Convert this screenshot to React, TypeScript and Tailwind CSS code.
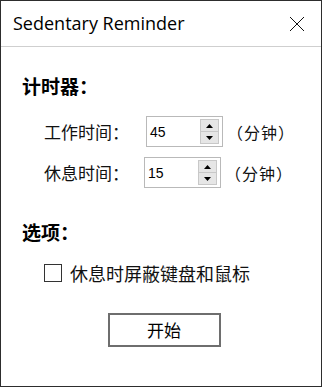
import { useState } from 'react';

const cjk = '"Microsoft YaHei", "Noto Sans CJK SC", "Noto Sans", sans-serif';

function SpinBox({ value }: { value: string }) {
  return (
    <div className="flex h-[31px] w-[77px] items-center border border-[#b9b9b9] bg-white">
      <span className="flex-1 pl-[3px] font-['Liberation_Sans',sans-serif] text-[14px] leading-none text-black">
        {value}
      </span>
      <div className="mr-[3px] flex h-[25px] w-[19px] flex-col border border-[#c8c8c8] bg-[#e6e6e6]">
        <div className="flex flex-1 items-center justify-center border-b border-[#c8c8c8]">
          <svg width="7" height="4" viewBox="0 0 7 4">
            <path d="M0 4 L3.5 0 L7 4 Z" fill="#000" />
          </svg>
        </div>
        <div className="flex flex-1 items-center justify-center">
          <svg width="7" height="4" viewBox="0 0 7 4">
            <path d="M0 0 L3.5 4 L7 0 Z" fill="#000" />
          </svg>
        </div>
      </div>
    </div>
  );
}

function TimeRow({ label, value, shift }: { label: string; value: string; shift?: boolean }) {
  return (
    <div className="flex h-[31px] items-center">
      <span
        className={`whitespace-nowrap pl-[43px] text-[17px] text-[#111] ${shift ? 'w-[143px]' : 'w-[145px]'}`}
        style={{ fontFamily: cjk }}
      >
        {label}
      </span>
      <SpinBox value={value} />
      <span
        className="ml-[4px] whitespace-nowrap text-[16px] tracking-[1px] text-[#111]"
        style={{ fontFamily: cjk }}
      >
        （分钟）
      </span>
    </div>
  );
}

export default function App() {
  const [blocked, setBlocked] = useState(false);

  return (
    <div className="flex h-[387px] w-[322px] flex-col border border-[#2d2d2d] bg-white">
      <div className="flex h-[46px] shrink-0 items-center justify-between border-b border-[#cfcfcf] pl-[12px] pr-[16px]">
        <span className="font-['Open_Sans',sans-serif] text-[18px] text-black">
          Sedentary Reminder
        </span>
        <svg width="16" height="16" viewBox="0 0 16 16">
          <path d="M1 1 L15 15 M15 1 L1 15" stroke="#111" strokeWidth="1" />
        </svg>
      </div>

      <div className="flex flex-col" style={{ fontFamily: cjk }}>
        <h2 className="mt-[28px] pl-[21px] text-[19px] font-bold leading-[22px] text-black">
          计时器：
        </h2>
        <div className="mt-[19px] flex flex-col gap-[10px]">
          <TimeRow label="工作时间：" value="45" />
          <TimeRow label="休息时间：" value="15" shift />
        </div>

        <h2 className="mt-[33px] pl-[21px] text-[19px] font-bold leading-[22px] text-black">
          选项：
        </h2>

        <label className="mt-[19px] flex items-center pl-[43px]">
          <span
            onClick={() => setBlocked(!blocked)}
            className="flex h-[18px] w-[18px] items-center justify-center border border-[#333] bg-white"
          >
            {blocked && (
              <svg width="12" height="12" viewBox="0 0 12 12">
                <path d="M2 6 L5 9 L10 3" stroke="#000" strokeWidth="1.5" fill="none" />
              </svg>
            )}
          </span>
          <span className="ml-[8px] text-[18px] leading-[22px] text-[#111]">休息时屏蔽键盘和鼠标</span>
        </label>

        <div className="mt-[29px] flex justify-center pl-[6px]">
          <button className="flex h-[34px] w-[113px] items-center justify-center border-2 border-[#6e6e6e] bg-white text-[17px] text-black">
            开始
          </button>
        </div>
      </div>
    </div>
  );
}
